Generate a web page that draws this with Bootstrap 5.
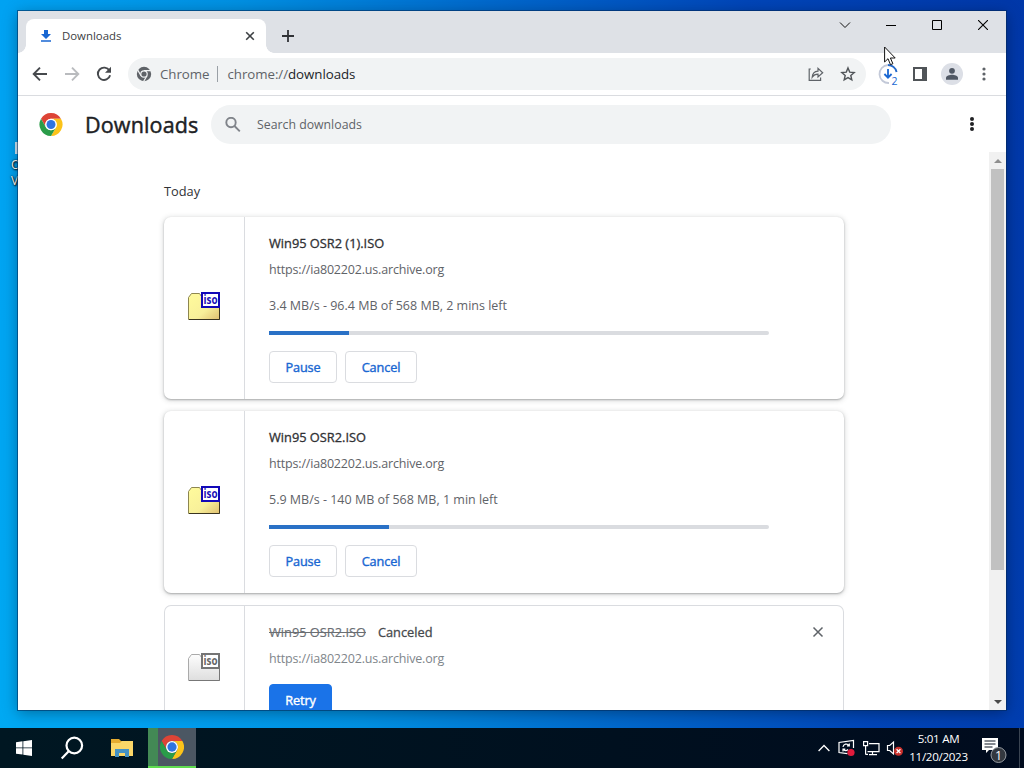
<!DOCTYPE html>
<html lang="en">
<head>
  <meta charset="UTF-8" />
  <meta name="viewport" content="width=device-width, initial-scale=1.0"/>
  <title>Downloads</title>
  <link href="https://cdn.jsdelivr.net/npm/bootstrap@5.3.2/dist/css/bootstrap.min.css" rel="stylesheet"/>
  <script src="https://cdn.jsdelivr.net/npm/bootstrap@5.3.2/dist/js/bootstrap.bundle.min.js"></script>
  <style>
    body {
      font-family: "Open Sans", "Noto Sans", sans-serif;
      font-size: 12.5px;
      line-height: 20px;
      color: #202124;
    }
    svg { display: block; flex: none; }
    .desktop {
      width: 1024px;
      height: 768px;
      background: linear-gradient(80deg, #00a9f2 0%, #00a2f2 12%, #0090e2 32%, #0068cc 54%, #0045b8 76%, #0037a8 100%);
    }
    .shortcut-label {
      left: 11px;
      top: 142px;
      color: #fff;
      font-size: 12px;
      line-height: 16px;
      text-shadow: 1px 1px 2px #000, 0 0 2px #000;
    }
    .shortcut-label i { display: block; width: 8px; height: 12px; margin: 0 0 3px 4px; background: #cfe6f5; }

    /* browser window */
    .browser {
      left: 18px;
      top: 11px;
      width: 988px;
      height: 699px;
      background: #fff;
      outline: 1px solid rgba(0, 40, 90, .55);
      box-shadow: 0 3px 14px rgba(0, 0, 0, .35);
    }
    .tab-strip { height: 42px; background: #dee1e6; padding-left: 8px; }
    .page-tab {
      width: 240px;
      height: 34px;
      margin-top: 8px;
      padding: 0 10px 0 12px;
      background: #fff;
      border-radius: 8px 8px 0 0;
      font-size: 11.4px;
      color: #3c4043;
    }
    .page-tab::before, .page-tab::after {
      content: "";
      position: absolute;
      bottom: 0;
      width: 8px;
      height: 8px;
      background: radial-gradient(circle at 0 0, transparent 7.5px, #fff 8px);
    }
    .page-tab::before { left: -8px; }
    .page-tab::after { right: -8px; transform: scaleX(-1); }
    .caption-btn { width: 46px; height: 28px; }
    .tool-bar { height: 43px; padding: 0 6px; border-bottom: 1px solid #dadce0; }
    .tool-btn { width: 32px; height: 32px; }
    .omnibox { width: 738px; height: 32px; border-radius: 16px; background: #f1f3f4; font-size: 13.3px; letter-spacing: -.05px; color: #5f6368; margin: 0 6px 0 8px; padding: 0 2px 0 8px; }
    .omnibox .divide { width: 1px; height: 16px; background: #9aa0a6; margin: 0 9px 0 8px; }
    .page-head { height: 56px; padding: 0 18px 0 21px; }
    .page-head h1 {
      width: 126px;
      margin-left: 22px;
      padding-top: 2px;
      font-size: 21.5px;
      font-weight: 400;
      letter-spacing: .15px;
      line-height: 28px;
      -webkit-text-stroke: .45px #202124;
    }
    .search-pill { width: 680px; height: 39px; border-radius: 20px; background: #f1f3f4; color: #5f6368; font-size: 12.3px; padding: 1px 0 0 14px; }

    /* download list */
    .list-area { height: 558px; }
    .dl-list { width: 680px; margin-left: 146px; padding-top: 29px; }
    .dl-day { margin-bottom: 16px; font-size: 12.8px; color: #303236; }
    .dl-item {
      height: 182px;
      margin-bottom: 12px;
      border-radius: 7px;
      background: #fff;
      box-shadow: 0 1px 2px rgba(60, 64, 67, .35), 0 1px 5px 1px rgba(60, 64, 67, .17);
    }
    .dl-gone { height: 128px; box-shadow: inset 0 0 0 1px #dadce0; }
    .dl-icon { width: 81px; border-right: 1px solid #dadce0; }
    .dl-body { padding: 16px 24px 0; }
    .dl-gone .dl-body { padding-top: 17px; }
    .dl-name { font-size: 12.8px; color: #303134; -webkit-text-stroke: .3px #303134; }
    .dl-old { color: #6a6e73; -webkit-text-stroke: .15px #6a6e73; }
    .dl-state { margin-left: 12px; color: #46494d; -webkit-text-stroke: .3px #46494d; }
    .dl-close { margin-right: -4px; }
    .dl-url, .dl-status { color: #5f6368; white-space: nowrap; }
    .dl-url { margin-top: 7px; letter-spacing: -.18px; }
    .dl-status { margin: 16px 0 15px; }
    .dl-gone .dl-url { margin-bottom: 15px; color: #80868b; }
    .dl-bar { width: 500px; height: 4px; border-radius: 0 2px 2px 0; background: #dadce0; }
    .dl-bar .progress-bar { background: #2a71c6; }
    .dl-btn {
      height: 32px;
      padding: 0;
      border: 1px solid #dadce0;
      border-radius: 4px;
      color: #1967d2;
      font-size: 12.7px;
      letter-spacing: -.1px;
      -webkit-text-stroke: .4px #1967d2;
      line-height: 30px;
    }
    .dl-pause { width: 68px; }
    .dl-cancel { width: 72px; }
    .dl-retry { width: 63px; background: #1a73e8; border-color: #1a73e8; color: #fff; -webkit-text-stroke-color: #fff; }

    .scroll-col { width: 17px; background: #f1f1f1; }
    .scroll-thumb { width: 13px; height: 401px; background: #c1c1c1; }
    .scroll-end { height: 17px; }

    /* taskbar */
    .task-bar { left: 0; top: 728px; width: 1024px; height: 40px; background: linear-gradient(90deg, #001722, #00101f 60%, #000b1e); color: #fff; }
    .task-btn { width: 48px; height: 40px; }
    .task-active { background: linear-gradient(90deg, #438955 10px, #4b5763 10px); border-bottom: 2px solid #5fdc50; }
    .tray-clock { width: 68px; padding: 0 0 1px 1px; font-size: 11.6px; letter-spacing: -.3px; line-height: 18px; }
    .tray-gap { margin-left: 6px; }
    .task-edge { width: 1px; height: 40px; margin: 0 4px 0 11px; background: #3a4452; }
    .pointer { left: 884px; top: 46px; }
  </style>
</head>
<body>

  <svg width="0" height="0" class="position-absolute">
    <defs>
      <symbol id="chromeLogo" viewBox="0 0 48 48">
        <path fill="#dd4436" d="M3.215 12A24 24 0 0 1 44.785 12H24A12 12 0 0 0 13.608 30Z"/>
        <path fill="#fbc31a" d="M44.785 12A24 24 0 0 1 24 48L34.392 30A12 12 0 0 0 24 12Z"/>
        <path fill="#2a9c49" d="M24 48A24 24 0 0 1 3.215 12L13.608 30A12 12 0 0 0 34.392 30Z"/>
        <circle cx="24" cy="24" r="12" fill="#fff"/>
        <circle cx="24" cy="24" r="9.3" fill="#2f74e0"/>
      </symbol>
      <linearGradient id="folderFill" x1="0" y1="0" x2="1" y2="1">
        <stop offset="0" stop-color="#fffb9c"/><stop offset=".6" stop-color="#f8f09a"/><stop offset="1" stop-color="#e0c070"/>
      </linearGradient>
      <linearGradient id="greyFill" x1="0" y1="0" x2="0" y2="1">
        <stop offset="0" stop-color="#fdfdfd"/><stop offset="1" stop-color="#dedede"/>
      </linearGradient>
    </defs>
  </svg>

  <div class="desktop position-relative overflow-hidden">
    <div class="shortcut-label position-absolute"><i></i>O<br>V</div>

    <div class="browser position-absolute d-flex flex-column">
      <div class="tab-strip d-flex">
        <div class="page-tab position-relative d-flex align-items-center">
          <svg width="16" height="16" viewBox="0 0 16 16" fill="#1967d2"><path d="M6 2h4v4h3l-5 5-5-5h3zM3 12.3h10v1.5H3z"/></svg>
          <span class="ms-2 me-auto">Downloads</span>
          <svg width="12" height="12" viewBox="0 0 12 12" stroke="#3c4043" stroke-width="1.6"><path d="M2.2 2.2l7.6 7.6M9.8 2.2L2.2 9.8"/></svg>
        </div>
        <div class="d-flex align-items-center mt-2 ms-3">
          <svg width="12" height="12" viewBox="0 0 12 12" stroke="#303236" stroke-width="1.8"><path d="M6 0v12M0 6h12"/></svg>
        </div>
        <div class="d-flex ms-auto">
          <div class="caption-btn d-flex align-items-center justify-content-center"><svg width="12" height="12" viewBox="0 0 12 12" fill="none" stroke="#111"><path d="M1 3.5l5 5 5-5"/></svg></div>
          <div class="caption-btn d-flex align-items-center justify-content-center"><svg width="10" height="10" viewBox="0 0 10 10" stroke="#000"><path d="M0 5.5h10"/></svg></div>
          <div class="caption-btn d-flex align-items-center justify-content-center"><svg width="10" height="10" viewBox="0 0 10 10" fill="none" stroke="#000"><path d="M.5.5h9v9h-9z"/></svg></div>
          <div class="caption-btn d-flex align-items-center justify-content-center"><svg width="10" height="10" viewBox="0 0 10 10" stroke="#000" stroke-width="1.1"><path d="M0 0l10 10M10 0L0 10"/></svg></div>
        </div>
      </div>

      <div class="tool-bar d-flex align-items-center">
        <div class="tool-btn d-flex align-items-center justify-content-center"><svg width="16" height="16" viewBox="0 0 16 16" fill="none" stroke="#46494d" stroke-width="1.9"><path d="M15 8H2M8 1.7L1.7 8 8 14.3"/></svg></div>
        <div class="tool-btn d-flex align-items-center justify-content-center"><svg width="16" height="16" viewBox="0 0 16 16" fill="none" stroke="#b9bbbe" stroke-width="1.9"><path d="M1 8h13M8 1.7L14.3 8 8 14.3"/></svg></div>
        <div class="tool-btn d-flex align-items-center justify-content-center"><svg width="16" height="16" viewBox="0 0 16 16"><path fill="none" stroke="#46494d" stroke-width="1.9" d="M13.4 4.6A6.2 6.2 0 1 0 14.1 9.3"/><path fill="#46494d" d="M15 .8v6H9z"/></svg></div>
        <div class="omnibox d-flex align-items-center">
          <svg width="16" height="16" viewBox="0 0 16 16"><circle cx="8" cy="8" r="7.2" fill="#5f6368"/><g stroke="#f1f3f4" stroke-width="1.2"><path d="M8 4.6h7M5 9.8L1.5 3.6M11 9.8l-3.6 6"/></g><circle cx="8" cy="8" r="3.8" fill="#f1f3f4"/><circle cx="8" cy="8" r="2.6" fill="#5f6368"/></svg>
          <span class="ms-2">Chrome</span>
          <span class="divide"></span>
          <span class="me-auto">chrome://<span class="text-dark">downloads</span></span>
          <div class="tool-btn d-flex align-items-center justify-content-center"><svg width="16" height="16" viewBox="0 0 16 16" fill="none" stroke="#5f6368" stroke-width="1.2"><path d="M2.8 3H1.2v11.4h11.4v-3M4.2 11.2C4.4 7.5 6.5 5.5 10 5.2V2.3l4.7 4.4L10 11V8.2c-2.6 0-4.5 1-5.8 3z"/></svg></div>
          <div class="tool-btn d-flex align-items-center justify-content-center"><svg width="16" height="16" viewBox="0 0 16 16" fill="none" stroke="#505458" stroke-width="1.4"><path d="M8 1.9l1.7 4.2 4.5.4-3.4 3 1 4.4L8 11.6l-3.8 2.3 1-4.4-3.4-3 4.5-.4z"/></svg></div>
        </div>
        <div class="tool-btn d-flex align-items-center justify-content-center">
          <svg width="28" height="30" viewBox="-3 -3 28 30" fill="none">
            <path stroke="#c3c9d8" stroke-width="1.8" d="M12 21A9 9 0 1 1 11 3"/>
            <path stroke="#2468c8" stroke-width="1.9" d="M11 3A9 9 0 0 1 19.6 10"/>
            <path stroke="#1967d2" stroke-width="1.8" d="M11 7v8.5M7.4 12l3.6 3.7 3.6-3.7"/>
            <text x="14.5" y="22.5" font-size="10.5" fill="#1967d2">2</text>
          </svg>
        </div>
        <div class="tool-btn d-flex align-items-center justify-content-center"><svg width="14" height="14" viewBox="0 0 14 14"><path fill="#505458" fill-rule="evenodd" d="M0 0h14v14H0zM2 2v10h7V2z"/></svg></div>
        <div class="tool-btn d-flex align-items-center justify-content-center"><svg width="22" height="22" viewBox="0 0 22 22"><circle cx="11" cy="11" r="11" fill="#dcdfe6"/><circle cx="11" cy="7.8" r="2.9" fill="#505864"/><path fill="#505864" d="M5 16.8v-2c0-2 3.6-3 6-3s6 1 6 3v2z"/></svg></div>
        <div class="tool-btn d-flex align-items-center justify-content-center"><svg width="4" height="14" viewBox="0 0 4 14" fill="#5f6368"><circle cx="2" cy="2" r="1.6"/><circle cx="2" cy="7" r="1.6"/><circle cx="2" cy="12" r="1.6"/></svg></div>
      </div>

      <div class="page-head d-flex align-items-center">
        <svg width="24" height="23"><use href="#chromeLogo"/></svg>
        <h1 class="mb-0">Downloads</h1>
        <div class="search-pill d-flex align-items-center">
          <svg width="16" height="16" viewBox="0 0 16 16" fill="none" stroke="#80848a" stroke-width="1.9"><circle cx="6" cy="5.5" r="4.7"/><path d="M9.5 9l5.3 5.3"/></svg>
          <span class="ms-3">Search downloads</span>
        </div>
        <svg class="ms-auto me-2" width="16" height="16" viewBox="0 0 16 16" fill="#202124"><circle cx="8" cy="3" r="2"/><circle cx="8" cy="8" r="2"/><circle cx="8" cy="13" r="2"/></svg>
      </div>

      <div class="list-area d-flex overflow-hidden">
        <div class="dl-list me-auto">
          <div class="dl-day">Today</div>

          <div class="dl-item d-flex">
            <div class="dl-icon d-flex align-items-center justify-content-center">
              <svg width="32" height="32" viewBox="0 0 32 32">
                <path fill="url(#folderFill)" stroke="#8d8650" d="M.5 27.5V5.5L3.5 1.5H11.5L13.5 4.5H31.5V27.5Z"/>
                <path fill="none" stroke="#3a3420" d="M1 27.5H31.5V16"/>
                <path fill="#fff" stroke="#1208b8" stroke-width="2" d="M14 1h17v14H14z"/>
                <text x="15.5" y="12.3" font-size="12" font-weight="700" fill="#1a10b8" textLength="14" lengthAdjust="spacingAndGlyphs">iso</text>
              </svg>
            </div>
            <div class="dl-body">
              <div class="dl-name">Win95 OSR2 (1).ISO</div>
              <div class="dl-url">https://ia802202.us.archive.org</div>
              <div class="dl-status">3.4 MB/s - 96.4 MB of 568 MB, 2 mins left</div>
              <div class="dl-bar progress mb-3"><div class="progress-bar" style="width: 16%"></div></div>
              <div class="d-flex gap-2">
                <button type="button" class="btn dl-btn dl-pause">Pause</button>
                <button type="button" class="btn dl-btn dl-cancel">Cancel</button>
              </div>
            </div>
          </div>

          <div class="dl-item d-flex">
            <div class="dl-icon d-flex align-items-center justify-content-center">
              <svg width="32" height="32" viewBox="0 0 32 32">
                <path fill="url(#folderFill)" stroke="#8d8650" d="M.5 27.5V5.5L3.5 1.5H11.5L13.5 4.5H31.5V27.5Z"/>
                <path fill="none" stroke="#3a3420" d="M1 27.5H31.5V16"/>
                <path fill="#fff" stroke="#1208b8" stroke-width="2" d="M14 1h17v14H14z"/>
                <text x="15.5" y="12.3" font-size="12" font-weight="700" fill="#1a10b8" textLength="14" lengthAdjust="spacingAndGlyphs">iso</text>
              </svg>
            </div>
            <div class="dl-body">
              <div class="dl-name">Win95 OSR2.ISO</div>
              <div class="dl-url">https://ia802202.us.archive.org</div>
              <div class="dl-status">5.9 MB/s - 140 MB of 568 MB, 1 min left</div>
              <div class="dl-bar progress mb-3"><div class="progress-bar" style="width: 24%"></div></div>
              <div class="d-flex gap-2">
                <button type="button" class="btn dl-btn dl-pause">Pause</button>
                <button type="button" class="btn dl-btn dl-cancel">Cancel</button>
              </div>
            </div>
          </div>

          <div class="dl-item dl-gone d-flex">
            <div class="dl-icon d-flex align-items-center justify-content-center">
              <svg width="32" height="32" viewBox="0 0 32 32">
                <path fill="url(#greyFill)" stroke="#aaa" d="M.5 27.5V5.5L3.5 1.5H11.5L13.5 4.5H31.5V27.5Z"/>
                <path fill="none" stroke="#777" d="M1 27.5H31.5V16"/>
                <path fill="#fff" stroke="#757575" stroke-width="2" d="M14 1h17v14H14z"/>
                <text x="15.5" y="12.3" font-size="12" font-weight="700" fill="#666" textLength="14" lengthAdjust="spacingAndGlyphs">iso</text>
              </svg>
            </div>
            <div class="dl-body flex-grow-1">
              <div class="d-flex align-items-center">
                <span class="dl-name dl-old text-decoration-line-through">Win95 OSR2.ISO</span>
                <span class="dl-name dl-state">Canceled</span>
                <svg class="dl-close ms-auto" width="12" height="12" viewBox="0 0 12 12" stroke="#5f6368" stroke-width="1.5"><path d="M1.5 1.5l9 9M10.5 1.5l-9 9"/></svg>
              </div>
              <div class="dl-url">https://ia802202.us.archive.org</div>
              <button type="button" class="btn dl-btn dl-retry">Retry</button>
            </div>
          </div>
        </div>

        <div class="scroll-col d-flex flex-column align-items-center">
          <div class="scroll-end d-flex align-items-center"><svg width="8" height="4" viewBox="0 0 8 4" fill="#8f8f8f"><path d="M0 4l4-4 4 4z"/></svg></div>
          <div class="scroll-thumb"></div>
          <div class="scroll-end d-flex align-items-center mt-auto"><svg width="8" height="4" viewBox="0 0 8 4" fill="#4a4a4a"><path d="M0 0l4 4 4-4z"/></svg></div>
        </div>
      </div>
    </div>

    <svg class="pointer position-absolute" width="13" height="20" viewBox="0 0 13 20"><path fill="#fff" stroke="#111" d="M.6 1v15l3.4-3.3 2.5 6 2.4-1-2.5-5.7h4.8z"/></svg>

    <div class="task-bar position-absolute d-flex align-items-center">
      <div class="task-btn d-flex align-items-center justify-content-center"><svg width="16" height="16" viewBox="0 0 16 16" fill="#fff"><path d="M0 2.2L6.5 1.3v6.2H0zM7.3 1.2L16 0v7.5H7.3zM0 8.3h6.5v6.3L0 13.7zM7.3 8.3H16V16l-8.7-1.3z"/></svg></div>
      <div class="task-btn d-flex align-items-center justify-content-center"><svg width="24" height="24" viewBox="0 0 24 24" fill="none" stroke="#fff" stroke-width="2.2"><circle cx="14.3" cy="9.5" r="7.8"/><path d="M8.7 15.2L1.7 22.4"/></svg></div>
      <div class="task-btn d-flex align-items-center justify-content-center ms-1 pe-1"><svg width="22" height="20" viewBox="0 0 22 20"><path fill="#e5ac30" d="M0 1h8l2 2h12v5H0z"/><path fill="#fbd768" d="M0 5h9l2-2h11v15H0z"/><path fill="#4592c4" d="M4 11h14v8h-4v-4H8v4H4z"/></svg></div>
      <div class="task-btn task-active d-flex align-items-center justify-content-center"><svg width="24" height="24"><use href="#chromeLogo"/></svg></div>

      <div class="d-flex align-items-center ms-auto">
        <svg width="12" height="8" viewBox="0 0 12 8" fill="none" stroke="#fff" stroke-width="1.3"><path d="M.6 7L6 1.5 11.4 7"/></svg>
        <svg class="ms-2" width="18" height="18" viewBox="0 0 18 18" fill="none" stroke="#fff" stroke-width="1.2"><path d="M15.5 9V1.5L1 3.5v10l8.5 1.2"/><path d="M5 8a3.3 3.3 0 0 1 6-1.5M11.3 4.5v2.3H9M10 10.5a3.3 3.3 0 0 1-4.5 0M5 12.5v-2.3h2.3"/><circle cx="13" cy="13.5" r="3.6" fill="#e01b3c" stroke="none"/></svg>
        <svg class="tray-gap" width="18" height="16" viewBox="0 0 18 16" fill="none" stroke="#fff" stroke-width="1.2"><path d="M7 3.6h10v8H5.5M10.5 11.6v3M7 14.6h8M1.6 1.6h4v4h-4zM3.6 5.6v9M3.6 14.4H6"/></svg>
        <svg class="tray-gap" width="18" height="16" viewBox="0 0 18 16"><path fill="none" stroke="#fff" stroke-width="1.2" d="M1.5 5.5h2.2L7.5 2v12L3.7 10.5H1.5z"/><circle cx="12.5" cy="11.2" r="4.5" fill="#c9302c"/><path stroke="#fff" stroke-width="1.3" d="M10.6 9.3l3.8 3.8M14.4 9.3l-3.8 3.8"/></svg>
        <div class="tray-clock text-center"><div>5:01 AM</div><div>11/20/2023</div></div>
        <svg class="ms-2" width="28" height="30" viewBox="-1 0 28 30"><path fill="#fff" d="M1 5h16v12H8l-3 3v-3H1z"/><path stroke="#0a1422" stroke-width="1.2" d="M3.5 8h11M3.5 11h11M3.5 14h8"/><circle cx="17.5" cy="22" r="7.5" fill="#33383f" stroke="#969ba1"/><text x="17.5" y="26.5" text-anchor="middle" font-size="12.5" fill="#fff">1</text></svg>
        <div class="task-edge"></div>
      </div>
    </div>
  </div>

</body>
</html>
